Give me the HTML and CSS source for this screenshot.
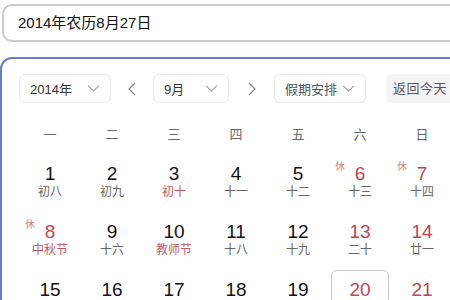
FILE: index.html
```html
<!DOCTYPE html>
<html lang="zh-CN">
<head>
    <meta charset="UTF-8">
    <meta name="viewport" content="width=device-width, initial-scale=1.0">
    <title>万年历</title>
    <link rel="stylesheet" href="styles.css">
</head>
<body>

<div class="search">2014年农历8月27日</div>

<div class="panel">
    <div class="toolbar">
        <div class="select year">
            <span>2014年</span>
            <svg class="chev" viewBox="0 0 14 8"><polyline points="1,1 7,7 13,1"/></svg>
        </div>
        <div class="arrow">
            <svg viewBox="0 0 8 14"><polyline points="7,1 1,7 7,13"/></svg>
        </div>
        <div class="select month">
            <span>9月</span>
            <svg class="chev" viewBox="0 0 14 8"><polyline points="1,1 7,7 13,1"/></svg>
        </div>
        <div class="arrow next">
            <svg viewBox="0 0 8 14"><polyline points="1,1 7,7 1,13"/></svg>
        </div>
        <div class="select holiday">
            <span>假期安排</span>
            <svg class="chev" viewBox="0 0 14 8"><polyline points="1,1 7,7 13,1"/></svg>
        </div>
        <div class="today-btn">返回今天</div>
    </div>

    <div class="week">
        <span>一</span><span>二</span><span>三</span><span>四</span><span>五</span><span>六</span><span>日</span>
    </div>

    <div class="days">
        <div class="day"><b>1</b><i>初八</i></div>
        <div class="day"><b>2</b><i>初九</i></div>
        <div class="day"><b>3</b><i class="fest">初十</i></div>
        <div class="day"><b>4</b><i>十一</i></div>
        <div class="day"><b>5</b><i>十二</i></div>
        <div class="day rest"><em>休</em><b>6</b><i>十三</i></div>
        <div class="day rest"><em>休</em><b>7</b><i>十四</i></div>

        <div class="day rest"><em>休</em><b>8</b><i class="fest">中秋节</i></div>
        <div class="day"><b>9</b><i>十六</i></div>
        <div class="day"><b>10</b><i class="fest">教师节</i></div>
        <div class="day"><b>11</b><i>十八</i></div>
        <div class="day"><b>12</b><i>十九</i></div>
        <div class="day weekend"><b>13</b><i>二十</i></div>
        <div class="day weekend"><b>14</b><i>廿一</i></div>

        <div class="day"><b>15</b><i>廿二</i></div>
        <div class="day"><b>16</b><i>廿三</i></div>
        <div class="day"><b>17</b><i>廿四</i></div>
        <div class="day"><b>18</b><i>廿五</i></div>
        <div class="day"><b>19</b><i>廿六</i></div>
        <div class="day weekend today"><b>20</b><i>廿七</i></div>
        <div class="day weekend"><b>21</b><i>廿八</i></div>
    </div>
</div>

</body>
</html>
```

FILE: styles.css
```css
body{
    margin: 0;
    background-color: #fff;
    font-family: "Liberation Sans", "Noto Sans CJK SC", sans-serif;
    color: #222;
    overflow: hidden;
}

.search{
    box-sizing: border-box;
    margin: 4px 0 0 2px;
    width: 520px;
    height: 38px;
    border: 2px solid #cbcbcb;
    border-radius: 10px;
    padding-left: 14px;
    font-size: 15px;
    line-height: 34px;
    color: #111;
}

.panel{
    margin-top: 15px;
    width: 520px;
    height: 400px;
    border: 2px solid #6b7cc6;
    border-radius: 12px;
    padding: 15px 0 0 17px;
}

.toolbar{
    display: flex;
    align-items: center;
    height: 29px;
}

.select{
    box-sizing: border-box;
    height: 29px;
    display: flex;
    align-items: center;
    justify-content: space-between;
    border: 1px solid #e6e6e6;
    border-radius: 6px;
    padding: 0 10px;
    font-size: 13px;
    color: #333;
}
.year{ width: 92px; }
.month{ width: 76px; }
.holiday{ width: 92px; padding-right: 10px; color: #555; }

.chev{
    width: 13px;
    height: 7px;
    fill: none;
    stroke: #9a9a9a;
    stroke-width: 1.2;
}

.arrow{
    width: 42px;
    display: flex;
    justify-content: center;
}
.arrow svg{
    width: 8px;
    height: 14px;
    fill: none;
    stroke: #888;
    stroke-width: 1.3;
}
.arrow.next{ width: 45px; }

.today-btn{
    margin-left: 20px;
    height: 29px;
    line-height: 29px;
    padding: 0 7px;
    border-radius: 6px;
    background-color: #f4f4f7;
    font-size: 13px;
    letter-spacing: 0.5px;
    color: #555;
}

.week{
    display: grid;
    grid-template-columns: repeat(7, 62px);
    margin-top: 19px;
    height: 26px;
    line-height: 26px;
    text-align: center;
    font-size: 13px;
    color: #666;
}

.days{
    display: grid;
    grid-template-columns: repeat(7, 62px);
    grid-auto-rows: 58px;
    margin-top: 6px;
}

.day{
    position: relative;
    box-sizing: border-box;
    margin: 0 2px;
    height: 58px;
    border: 1px solid transparent;
    border-radius: 6px;
    text-align: center;
}
.day b{
    display: block;
    padding-top: 9px;
    font-weight: normal;
    font-size: 19px;
    line-height: 20px;
    color: #111;
}
.day i{
    display: block;
    font-style: normal;
    font-size: 12px;
    line-height: 16px;
    color: #666;
}
.day i.fest{ color: #c65a63; }
.day em{
    position: absolute;
    left: 3px;
    top: 3px;
    font-style: normal;
    font-size: 10px;
    color: #d08890;
}

.rest b,
.weekend b{ color: #c4434f; }

.today{ border-color: #c9c9c9; }
```
